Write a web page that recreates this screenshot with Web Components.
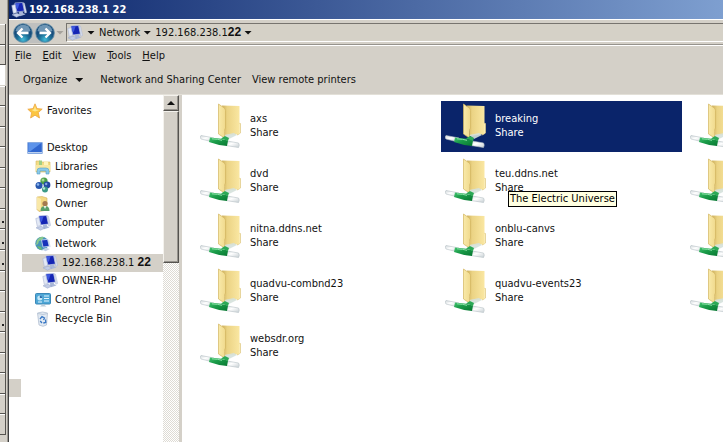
<!DOCTYPE html>
<html lang="en">
<head>
<meta charset="utf-8">
<title>192.168.238.1 22</title>
<style>
  html, body { height: 100%; }
  body { margin: 0; overflow: hidden; background: #d4d0c8; color: #111; font: 11px/14px "DejaVu Sans Condensed", Tahoma, "DejaVu Sans", sans-serif; }
</style>
</head>
<body>
<explorer-app></explorer-app>
<script>
const ICONS = {
  pc: ['0 0 16 16', '<path d="M.8 3.500l3.500-1 1.500 8-3.500 1z" fill="#e3e9f5" stroke="#a9b5d2" stroke-width=".6"/><path d="M3.800 1l7.700-.5 2 8.500-7.500 1z" fill="#1525b4" stroke="#b9c6e6" stroke-width=".7"/><path d="M4.600 1.600l4-.3-1.600 5-1.400 1z" fill="#3f5ae0"/><path d="M12 .6l1.500.6 2.200 9.300-2 .8z" fill="#d5dcec" stroke="#a4b1cf" stroke-width=".4"/><path d="M8 10l3.500-.4 1 2 2 1-5.500 1.600-3-1.200 2.200-1z" fill="#a9b7d8"/><path d="M1 12.800l5-1.500 4 1.700-4.500 2.200z" fill="#c3cde6" stroke="#94a4c8" stroke-width=".5"/>'],
  star: ['0 0 16 16', '<path d="M8 .8l2 4.800 5.200.5-3.900 3.500 1.200 5.400L8 12.200 3.600 15l1-5.300L.8 6.200 6 5.600z" fill="#fbc540" stroke="#eda645" stroke-width=".8"/><path d="M8 2.500l1 4 3.500.6-4.500 1.400-3.500-1.600 2.500-.6z" fill="#ffe88e"/>'],
  desktop: ['0 0 16 16', '<path d="M.8 2.500h14.400v11H.8z" fill="#2f66cf" stroke="#85a9e0"/><path d="M1.500 3h12.800L3 11.500H1.500z" fill="#5c93ea"/><path d="M1 12.500h14" stroke="#bcd0ef"/>'],
  lib: ['0 0 16 16', '<path d="M1 2h4l1 1h9v10H1z" fill="#f3dc85" stroke="#d6b85f" stroke-width=".6"/><path d="M4 1.500h3v5H4z" fill="#9fce83"/><path d="M9 2.500h4v4H9z" fill="#fff4bd"/><path d="M.8 6h14.400v6H.8z" fill="#f8e8a2"/><path d="M2 15v-3q0-3 3-3h6q3 0 3 3v3h-3v-3H5v3z" fill="#8ac9e8" stroke="#569fc8" stroke-width=".6"/>'],
  home: ['0 0 16 16', '<circle cx="9" cy="4" r="3.600" fill="#4b9e49"/><circle cx="8" cy="3" r="1.500" fill="#a7d991"/><circle cx="4" cy="8.500" r="3.500" fill="#2858ae"/><circle cx="3" cy="7.500" r="1.300" fill="#8db6ed"/><circle cx="12" cy="8" r="3.400" fill="#2349a2"/><circle cx="11.200" cy="7" r="1.200" fill="#86a9e5"/><circle cx="10" cy="12.500" r="3" fill="#3c9a86"/><circle cx="9" cy="11.500" r="1.200" fill="#b8e6d5"/>'],
  user: ['0 0 16 16', '<path d="M2 1l5-.5 5 1.500v12L4 15.500l-2-2z" fill="#f4d982" stroke="#d3b25c" stroke-width=".6"/><path d="M2 1l4 2v12l-4-2z" fill="#f9e8a8"/><circle cx="10" cy="7.500" r="2.600" fill="#a47a50"/><path d="M5.500 15q0-5 4.500-5t4.500 5z" fill="#58a06b"/><path d="M8.500 10l1.500 3 1.500-3z" fill="#e9f2ea"/>'],
  net: ['0 0 16 16', '<circle cx="7" cy="7.500" r="6.700" fill="#4794b9"/><path d="M2 4q3-4 7-3l-2 3-3 1-1 3-2 1z" fill="#88c98c"/><path d="M2 10l4 1 1 3q-3 0-5-4z" fill="#6db76f"/><path d="M6.500 4l6-.6 1.800 6.800-6.300.9z" fill="#1731ba" stroke="#cdd8f1" stroke-width=".8"/><path d="M13 3.500l1.200.5 1.500 7-1.300.5z" fill="#d5dff0"/><path d="M7 13.500l4-1.800 4 1.300-4.500 2.200z" fill="#bfcfe6"/>'],
  panel: ['0 0 16 16', '<rect x=".5" y="1.500" width="15" height="10.500" rx="1" fill="#4ea7d6" stroke="#3b88b8"/><circle cx="4.800" cy="6" r="2.500" fill="#c4e8f8"/><path d="M4.800 6V3.500A2.500 2.500 0 0 1 7.300 6z" fill="#2d6fb0"/><path d="M9 4h5M9 6.500h5M9 9h5M3 10h4" stroke="#e3f6ff"/><path d="M5 14.500l3-2.500 3.500 2.500z" fill="#b9cbd8"/>'],
  bin: ['0 0 16 16', '<path d="M2.500 2l5-1 5 1-1 12-3.500 1.300L4 14z" fill="#e2eaf3" stroke="#a9b8cc" stroke-width=".7"/><path d="M3 2.500l5 1 4.500-1" fill="none" stroke="#bdc9d8"/><path d="M5 8l2-2.500L9.500 7 8.500 9M10.500 8.500l.3 3-2.500.5M7 12l-1.800-2" fill="none" stroke="#3a78c4" stroke-width="1.300"/>'],
  share: ['0 0 42 48', '<defs><linearGradient id="a" x2="1"><stop stop-color="#cdb05c"/><stop offset=".3" stop-color="#ebd384"/><stop offset="1" stop-color="#fae7a2"/></linearGradient><linearGradient id="b" x2="1"><stop stop-color="#f9eaa9"/><stop offset="1" stop-color="#f0d98c"/></linearGradient><linearGradient id="g" y2="1"><stop stop-color="#46c572"/><stop offset=".4" stop-color="#1b9d4a"/><stop offset="1" stop-color="#067630"/></linearGradient><linearGradient id="w" y2="1"><stop stop-color="#d3dadd"/><stop offset=".4" stop-color="#fff"/><stop offset="1" stop-color="#c6cfd3"/></linearGradient></defs><path d="M37.500 21l3 .5v9.500l-3 2z" fill="#fbf1c6" stroke="#dcc57f" stroke-width=".7"/><path d="M22 3.500L39.500 4v28L25 34z" fill="url(#a)"/><path d="M24 33l10-2 3 2-8 4z" fill="#d5e1dc" opacity=".9"/><path d="M18.500 2l5 3.500q2 1 2 3V26q-1 1-1 3.500v6.500l-6-4z" fill="url(#b)" stroke="#d3b55f" stroke-width=".7"/><g transform="translate(0 2)"><path d="M1 31.500q-1.500 1.500 0 3.500l12 3 1-4z" fill="url(#w)" stroke="#b5c0c5" stroke-width=".6"/><path d="M27 37l11.500 2q1.500 2 0 4.500L26 41.500z" fill="url(#w)" stroke="#b5c0c5" stroke-width=".6"/><path d="M10 33.500q9 .5 18 3l-1 5.500q-10-1-18-4z" fill="url(#g)"/><path d="M21 34.500l4-2.500 4 2-1 3z" fill="#2ca956"/><path d="M12 34.800q6 .3 10 1.500" stroke="#8de3a8" fill="none"/></g>'],
  back: ['0 0 20 20', '<defs><radialGradient id="r" cy=".85"><stop stop-color="#45bdd9"/><stop offset=".6" stop-color="#1c7098"/><stop offset="1" stop-color="#174d7c"/></radialGradient></defs><circle cx="10" cy="10" r="9.300" fill="url(#r)" stroke="#5e8ba6" stroke-width=".8"/><path d="M2.500 8Q4 2 10 1.800T17.500 8Q10 11 2.500 8z" fill="#c5e0ed" opacity=".5"/><path d="M15.500 10H5.500M9.500 5.500L5 10l4.500 4.500" fill="none" stroke="#fff" stroke-width="2.300"/>']
};

const define = (name, css, html, after) => {
  const t = document.createElement('template');
  t.innerHTML = `<style>*{box-sizing:border-box}button{font:inherit;color:inherit;background:none;border:0;padding:0;margin:0}a{color:inherit;text-decoration:none}${css}</style>${html}`;
  customElements.define(name, class extends HTMLElement {
    connectedCallback() {
      if (this.shadowRoot) return;
      this.attachShadow({ mode: 'open' }).append(t.content.cloneNode(true));
      if (after) after(this, this.shadowRoot);
    }
  });
};

define('ui-icon', ':host{display:block;flex:none;width:16px;height:16px}svg{display:block;width:100%;height:100%}', '<div></div>', (el, root) => {
  const [box, shapes] = ICONS[el.getAttribute('name')];
  const holder = root.querySelector('div');
  holder.style.height = '100%';
  holder.innerHTML = `<svg viewBox="${box}" aria-hidden="true">${shapes}</svg>`;
});

define('drop-arrow', ':host{display:block;flex:none;width:8px;height:4px;background:currentColor;clip-path:polygon(0 0,100% 0,50% 100%)}', '');

define('background-strip', `
  :host{display:flex;flex-direction:column;width:9px;padding-top:24px;background:linear-gradient(90deg,#d4d0c8 7px,#9b9892 7px 8px,#404040 8px)}
  .rows{display:grid;grid-auto-rows:1fr;min-height:411px;width:6px}
  .rows span{border:solid #55534f;border-width:0 1px 1px 0;box-shadow:inset 0 1px #fff;overflow:hidden;display:flex;justify-content:flex-end;align-items:flex-end;padding:0 1px 5px 0}
  .rows .field{background:#fff;border-color:#d4d0c8}
  .dot::after{content:"";width:2px;height:2px;background:#222}`,
  '<div class="rows"></div>', (el, root) => {
  root.querySelector('.rows').innerHTML = Array.from({ length: 20 }, (_, i) =>
    `<span class="${i === 2 ? 'field' : [9, 10, 11, 14].includes(i) ? 'dot' : ''}"></span>`).join('');
});

define('title-bar', `
  :host{display:flex;align-items:center;gap:2px;height:19px;padding-left:2px;background:linear-gradient(90deg,#0a246a,#7e9fd0);color:#fff;font-weight:bold}
  h1{font:inherit;margin:0}`,
  '<ui-icon name="pc"></ui-icon><h1><slot></slot></h1>');

define('address-bar', `
  :host{display:flex;align-items:center;height:27px;padding:3px 0 3px 4px;border-top:1px solid #fff;border-bottom:1px solid #fff;box-shadow:inset 0 -1px #96938d}
  .nav{display:flex;gap:2px;align-items:center;border-radius:10px;background:#bfc0bf}
  .nav ui-icon{width:20px;height:20px}
  .nav button{display:block}
  .forward{transform:scaleX(-1)}
  .recent{margin:0 2px 0 1px;color:#a5a29c}
  .field{flex:1;display:flex;align-items:center;align-self:stretch;gap:4px;border-top:1px solid #77746f;border-left:1px solid #77746f;border-bottom:1px solid #fff;background:#d5d1c7}
  .crumb{display:flex;align-items:center;gap:3px}
  b{font:bold 12px "Liberation Sans",Arial,sans-serif}`,
  `<div class="nav"><button aria-label="Back"><ui-icon name="back"></ui-icon></button><button class="forward" aria-label="Forward"><ui-icon name="back"></ui-icon></button></div>
   <drop-arrow class="recent"></drop-arrow>
   <div class="field"><ui-icon name="pc"></ui-icon>
     <button class="crumb" aria-label="Locations"><drop-arrow></drop-arrow></button>
     <button class="crumb">Network<drop-arrow></drop-arrow></button>
     <button class="crumb"><span>192.168.238.1<b>22</b></span><drop-arrow></drop-arrow></button>
   </div>`);

define('menu-bar', ':host{display:flex;gap:11px;height:20px;padding:0 6px;align-items:center}',
  ['File', 'Edit', 'View', 'Tools', 'Help'].map(s => `<button><u>${s[0]}</u>${s.slice(1)}</button>`).join(''));

define('command-bar', `
  :host{display:flex;gap:11px;height:29px;padding:0 14px;align-items:center;border-bottom:1px solid #e3e0d8}
  button{white-space:nowrap}.menu{display:flex;align-items:center;gap:8px;margin-right:6px}`,
  '<button class="menu">Organize<drop-arrow></drop-arrow></button><button>Network and Sharing Center</button><button>View remote printers</button>');

define('tree-item', `
  :host{display:flex;padding-left:18px}
  :host([level="2"]){padding-left:26px}
  :host([level="3"]){padding-left:33px}
  :host([selected]){margin-left:13px;padding-left:20px;background:#d4d0c8}
  a{display:flex;align-items:center;gap:4px;flex:1;white-space:nowrap}
  ::slotted(b){font:bold 12px "Liberation Sans",Arial,sans-serif}`,
  '<a href="#"><span><slot></slot></span></a>', (el, root) => {
  const icon = document.createElement('ui-icon');
  icon.setAttribute('name', el.getAttribute('icon'));
  root.querySelector('a').prepend(icon);
});

define('scroll-bar', `
  :host{display:flex;flex-direction:column;width:16px;background:repeating-conic-gradient(#fff 0 25%,#dedbd4 0 50%) 0 0/2px 2px}
  .face{background:#d4d0c8;border:1px solid;border-color:#f4f2ed #55534f #55534f #f4f2ed;box-shadow:inset -1px -1px #96938d}
  button{height:16px;display:grid;place-items:center}
  drop-arrow{transform:scaleY(-1)}
  .thumb{height:152px}`,
  '<button class="face" aria-label="Scroll up"><drop-arrow></drop-arrow></button><div class="face thumb"></div>');

define('folder-tree', `
  :host{display:flex;background:#fff;width:173px;border-right:3px solid #d4d0c8}
  nav{flex:1;min-width:0;display:flex;flex-direction:column;padding-top:6px}
  .group{display:grid;grid-auto-rows:1fr;min-height:93px;margin-bottom:3px}
  .top{min-height:20px;margin-bottom:18px}
  .corner{width:12px;height:18px;margin-top:48px;background:#d4d0c8}`,
  `<nav aria-label="Folders">
    <div class="group top"><tree-item icon="star">Favorites</tree-item></div>
    <div class="group">
      <tree-item icon="desktop">Desktop</tree-item>
      <tree-item level="2" icon="lib">Libraries</tree-item>
      <tree-item level="2" icon="home">Homegroup</tree-item>
      <tree-item level="2" icon="user">Owner</tree-item>
      <tree-item level="2" icon="pc">Computer</tree-item>
    </div>
    <div class="group">
      <tree-item level="2" icon="net">Network</tree-item>
      <tree-item level="3" selected icon="pc">192.168.238.1 <b>22</b></tree-item>
      <tree-item level="3" icon="pc">OWNER-HP</tree-item>
      <tree-item level="2" icon="panel">Control Panel</tree-item>
      <tree-item level="2" icon="bin">Recycle Bin</tree-item>
    </div>
    <div class="corner"></div>
  </nav><scroll-bar></scroll-bar>`);

define('share-tile', `
  :host{display:flex;position:relative}
  :host([selected]){background:#0a246a;color:#fff}
  a{flex:1;display:flex;align-items:center;gap:8px;padding-left:4px}
  ui-icon{width:42px;height:48px}
  span{display:block}
  ::slotted([slot=tip]){position:absolute;left:67px;top:35px;z-index:1;padding:0 1px;border:1px solid #000;background:#ffffe1;color:#000;white-space:nowrap}`,
  '<a href="#" aria-label="Share"><ui-icon name="share"></ui-icon><span><slot></slot><span class="kind">Share</span></span></a><slot name="tip"></slot>', (el, root) => {
  if (el.hasAttribute('bare')) root.querySelector('.kind').remove();
  else root.querySelector('a').removeAttribute('aria-label');
});

define('share-list', `
  :host{display:block;flex:1;min-width:0;overflow:hidden;background:#fff;padding:6px 0 0 14px}
  .grid{display:grid;grid-template-columns:repeat(3,241px);grid-auto-rows:1fr;gap:4px;min-height:270px}`,
  `<div class="grid">
    <share-tile>axs</share-tile><share-tile selected>breaking</share-tile><share-tile bare></share-tile>
    <share-tile>dvd</share-tile><share-tile>teu.ddns.net<span slot="tip" role="tooltip">The Electric Universe</span></share-tile><share-tile bare></share-tile>
    <share-tile>nitna.ddns.net</share-tile><share-tile>onblu-canvs</share-tile><share-tile bare></share-tile>
    <share-tile>quadvu-combnd23</share-tile><share-tile>quadvu-events23</share-tile><share-tile bare></share-tile>
    <share-tile>websdr.org</share-tile>
  </div>`);

define('explorer-app', `
  :host{display:flex;height:100vh}
  main{flex:1;min-width:0;display:flex;flex-direction:column}
  .body{flex:1;min-height:0;display:flex}`,
  `<background-strip></background-strip><main>
    <title-bar>192.168.238.1 22</title-bar><address-bar></address-bar><menu-bar></menu-bar><command-bar></command-bar>
    <div class="body"><folder-tree></folder-tree><share-list></share-list></div>
  </main>`);
</script>
</body>
</html>
